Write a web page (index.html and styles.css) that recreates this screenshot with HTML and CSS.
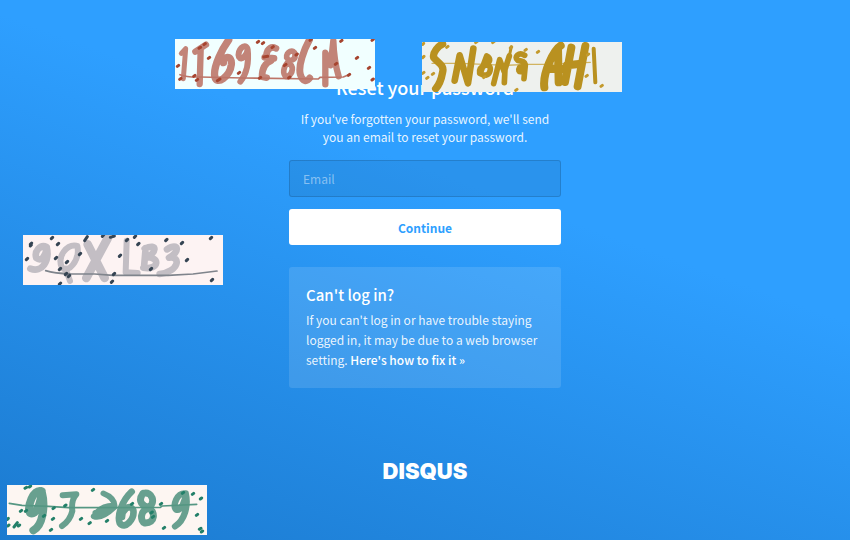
FILE: index.html
```html
<!DOCTYPE html>
<html lang="en">
<head>
<meta charset="utf-8">
<meta name="viewport" content="width=device-width, initial-scale=1">
<title>Reset your password</title>
<link rel="stylesheet" href="styles.css">
</head>
<body>
<main class="page">
  <h1 class="title">Reset your password</h1>
  <p class="intro">If you've forgotten your password, we'll send you an email to reset your password.</p>
  <form class="form">
    <input class="field" type="email" placeholder="Email" aria-label="Email">
    <button class="submit" type="submit">Continue</button>
  </form>
  <section class="help">
    <h2 class="help-title">Can't log in?</h2>
    <p class="help-text">If you can't log in or have trouble staying logged in, it may be due to a web browser setting. <a class="help-link" href="#">Here's how to fix it »</a></p>
  </section>
  <footer class="logo">DISQUS</footer>
</main>

<svg class="scrawl scrawl-red" viewBox="15 15 600 150" aria-hidden="true">
  <g class="brush" stroke-width="15">
    <path d="M34 58L47 44L40 134"/>
    <path stroke-width="19" d="M76 53L108 32M92 48L89 150"/>
    <path stroke-width="22" d="M176 18C158 42 130 96 134 126C140 158 180 126 184 92C187 60 157 68 160 86"/>
    <path stroke-width="18" d="M232 43C224 25 201 48 207 69C214 81 231 65 233 46C237 82 231 118 211 143"/>
    <path stroke-width="20" d="M318 43Q303 35 293 50Q282 74 304 80Q276 91 276 128L290 131M284 70L312 73"/>
    <path stroke-width="17" d="M376 62C372 42 347 53 350 71C357 86 377 78 375 63M352 86C335 107 340 130 353 128C369 118 374 95 353 86"/>
    <path stroke-width="21" d="M418 18C402 46 384 96 391 121C398 145 411 143 419 132"/>
    <path stroke-width="19" d="M466 151L466 56L482 94L490 20Q492 81 506 127"/>
  </g>
  <path class="line" stroke-width="5" d="M30 122Q50 130 90 129L220 132L445 135L450 130L520 129L536 122"/>
  <path class="dots" d="M262 25l4-3M277 29l4-3M87 43l5-3M102 32l4-3M115 73l4-3M22 97l4-3M29 136l4-3M71 127l4-3M79 139l4-3M142 140l8-5M205 118l4-3M306 41l4-3M281 69l12-2M343 95l5-4M378 63l4-3M420 19l4-3M433 43l4-3M512 22l4-3M559 73l4-3M595 103l4-3M606 19l4-3M606 138l4-3M496 91l4-3M535 124l4-3M356 132l4-3M268 133l4-3"/>
</svg>

<svg class="scrawl scrawl-gold" viewBox="15 18 600 150" aria-hidden="true">
  <path class="line" stroke-width="4" d="M45 82H130L270 88L330 85H400L520 79"/>
  <g class="brush" stroke-width="17">
    <path stroke-width="22" d="M77 24C64 29 46 50 50 65C66 83 82 88 77 108Q71 142 56 158"/>
    <path stroke-width="20" d="M113 134L128 58L153 142L169 38"/>
    <path d="M191 109L209 60Q228 70 207 87Q185 94 188 112Q213 126 219 105Q224 87 204 86"/>
    <path d="M230 143L248 71L262 108M262 140L264 100L277 60"/>
    <path stroke-width="9" d="M277 60L283 32"/>
    <path d="M323 58C306 46 289 63 302 73C329 76 331 89 308 94C297 112 322 113 325 87L321 128"/>
    <path stroke-width="24" d="M382 154C376 112 410 42 431 29M423 38L425 139M391 99H440"/>
    <path stroke-width="24" d="M463 35L444 138M505 30L482 151M450 88L493 83"/>
    <path stroke-width="12" d="M530 38L535 139"/>
  </g>
  <path class="dots" d="M17 65l4-4M17 25l3-3M89 34l4-3M176 20l4-3M227 20l4-3M324 43l4-3M361 49l4-3M29 127l4-3M46 115l4-3M17 112l4-3M200 125l4-3M296 163l4-3M511 57l4-3M507 121l4-3M552 151l4-3M280 36l4-3"/>
</svg>

<svg class="scrawl scrawl-grey" viewBox="15 15 600 150" aria-hidden="true">
  <g class="brush" stroke-width="20">
    <path d="M86 51C66 42 48 65 55 84C72 98 84 74 86 51C96 92 72 130 37 116"/>
    <path stroke-width="18" d="M175 47C148 42 117 77 131 111C149 136 187 89 178 48M143 116L156 153"/>
    <path stroke-width="26" d="M209 43L260 144M269 25L205 144"/>
    <path stroke-width="18" d="M326 32L323 127L359 129"/>
    <path d="M383 54L378 112M380 56C422 36 415 73 383 82C429 79 423 122 376 113"/>
    <path d="M447 58C483 35 487 66 453 83C491 77 482 126 425 132"/>
  </g>
  <path class="line" stroke-width="5" d="M83 122Q108 130 160 132H230L285 136H450L525 132L597 123"/>
  <path class="dots" d="M37 43l4-4M37 48l3-3M100 26l4-4M118 44l4-4M25 89l4-4M112 86l4-4M145 98l4-4M124 119l4-4M142 134l4-4M151 140l4-4M184 74l4-4M200 32l8-12M253 19l4-4M277 22l12-4M325 32l4-4M349 22l4-4M359 44l4-4M304 79l4-4M443 32l4-4M490 41l4-4M505 92l4-4M577 26l4-4M397 119l4-4M286 134l4-4M280 157l4-4M124 163l4-4M580 152l4-4"/>
</svg>

<svg class="scrawl scrawl-green" viewBox="15 15 600 150" aria-hidden="true">
  <g class="brush" stroke-width="24">
    <path d="M119 34C93 24 75 82 84 99C103 108 117 68 119 34C131 79 122 138 94 151"/>
    <path stroke-width="18" d="M182 46L223 43Q207 59 211 93Q204 122 180 138"/>
    <path stroke-width="17" d="M304 40Q337 53 338 77Q297 75 275 109Q298 119 338 81M280 98L328 82"/>
    <path stroke-width="20" d="M389 35C360 62 345 106 353 129C369 151 398 117 394 91C382 68 360 92 360 111"/>
    <path stroke-width="21" d="M423 40C405 65 423 80 441 82C461 69 452 33 424 40M441 85C412 91 415 124 428 129C462 131 459 93 441 85"/>
    <path stroke-width="19" d="M551 40C523 38 513 76 521 88C537 96 551 62 551 40C560 77 548 121 519 139"/>
  </g>
  <path class="line" stroke-width="5" d="M22 70L60 76L140 79L200 83L475 82L480 78L584 73"/>
  <path class="dots" d="M69 25l5-3M82 21l4-3M271 31l4-3M571 43l4-3M595 57l4-3M55 94l4-3M70 94l4-3M124 109l4-3M151 118l4-3M145 151l4-3M16 118l3-3M17 138l4-3M36 141l10-13M49 138l4-3M153 86l4-3M188 78l4-3M235 118l4-3M261 131l4-3M313 124l4-3M475 73l4-3M583 106l4-3M484 145l4-3M592 148l5-3M598 156l4-3M388 73l4-3M447 99l4-3M451 112l4-3M541 40l4-3"/>
</svg>
</body>
</html>
```
FILE: styles.css
```css
* {
  box-sizing: border-box;
}

body {
  margin: 0;
  min-height: 100vh;
  position: relative;
  color: #fff;
  font-family: "Noto Sans CJK SC", "Noto Sans", sans-serif;
  background: linear-gradient(200deg, #2e9fff 38%, #1b7acf 100%);
}

.page {
  max-width: 272px;
  margin: 0 auto;
  padding-top: 72px;
}

.title {
  margin: 0;
  font-size: 18px;
  line-height: 30px;
  font-weight: 500;
  text-align: center;
}

.intro {
  margin: 8px 0 14px;
  padding: 0 8px;
  font-size: 12px;
  line-height: 18px;
  text-align: center;
  color: rgba(255, 255, 255, 0.9);
}

.form {
  display: grid;
  gap: 12px;
}

.field,
.submit {
  width: 100%;
  height: 37px;
  border-radius: 3px;
  font-family: inherit;
  font-size: 12px;
}

.field {
  padding: 0 13px;
  color: #fff;
  border: 1px solid rgba(0, 0, 0, 0.14);
  background: rgba(0, 0, 0, 0.07);
}

.field::placeholder {
  color: rgba(255, 255, 255, 0.45);
}

.submit {
  height: 36px;
  border: 0;
  padding: 0;
  font-weight: 700;
  color: #2e9fff;
  background: #fff;
}

.help {
  margin-top: 22px;
  padding: 18px 17px;
  border-radius: 3px;
  background: rgba(255, 255, 255, 0.12);
}

.help-title {
  margin: 0 0 5px;
  font-size: 15px;
  line-height: 20px;
  font-weight: 500;
}

.help-text {
  margin: 0;
  font-size: 12px;
  line-height: 20px;
  color: rgba(255, 255, 255, 0.9);
}

.help-link {
  color: #fff;
  font-weight: 500;
  text-decoration: none;
}

.logo {
  margin-top: 67px;
  font-family: Inter, sans-serif;
  font-size: 22px;
  line-height: 32px;
  font-weight: 900;
  text-align: center;
}

.scrawl {
  position: absolute;
  width: 200px;
  height: 50px;
  fill: none;
  stroke-linecap: round;
  stroke-linejoin: round;
}

.dots {
  stroke-width: 9;
}

.scrawl-red {
  left: 175px;
  top: 39px;
  background: #f1ffff;
}

.scrawl-red .brush { stroke: #c28478; }
.scrawl-red .line { stroke: #bd7568; }
.scrawl-red .dots { stroke: #a6442f; }

.scrawl-gold {
  left: 422px;
  top: 42px;
  background: #eef1ee;
}

.scrawl-gold .brush { stroke: #b99120; }
.scrawl-gold .line { stroke: #d1b460; }
.scrawl-gold .dots { stroke: #c39a2c; }

.scrawl-grey {
  left: 23px;
  top: 235px;
  background: #fdf3f3;
}

.scrawl-grey .brush { stroke: #c3bec4; }
.scrawl-grey .line { stroke: #7f848c; }
.scrawl-grey .dots { stroke: #354453; }

.scrawl-green {
  left: 7px;
  top: 485px;
  background: #fdf6f2;
}

.scrawl-green .brush { stroke: #68a08f; }
.scrawl-green .line { stroke: #559783; }
.scrawl-green .dots { stroke: #238069; }
```
